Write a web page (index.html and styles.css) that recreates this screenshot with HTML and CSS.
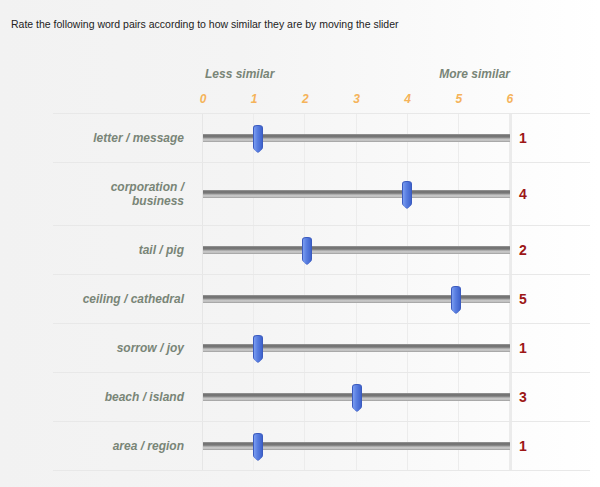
FILE: index.html
```html
<!DOCTYPE html>
<html>
<head>
<meta charset="utf-8">
<link rel="stylesheet" href="styles.css">
</head>
<body>
<div class="page">
  <p class="intro">Rate the following word pairs according to how similar they are by moving the slider</p>
  <div class="scale">
    <div class="head">
      <div class="spacer"></div>
      <div class="ends"><span>Less similar</span><span>More similar</span></div>
    </div>
    <div class="ticks">
      <div class="spacer"></div>
      <div class="nums"><span>0</span><span>1</span><span>2</span><span>3</span><span>4</span><span>5</span><span>6</span></div>
    </div>
    <div class="rows">
      <div class="row">
        <div class="label">letter / message</div>
        <div class="slider"><div class="track"><div class="handle" style="left:55px"></div></div></div>
        <div class="value">1</div>
      </div>
      <div class="row">
        <div class="label">corporation /<br>business</div>
        <div class="slider"><div class="track"><div class="handle" style="left:204px"></div></div></div>
        <div class="value">4</div>
      </div>
      <div class="row">
        <div class="label">tail / pig</div>
        <div class="slider"><div class="track"><div class="handle" style="left:104px"></div></div></div>
        <div class="value">2</div>
      </div>
      <div class="row">
        <div class="label">ceiling / cathedral</div>
        <div class="slider"><div class="track"><div class="handle" style="left:253px"></div></div></div>
        <div class="value">5</div>
      </div>
      <div class="row">
        <div class="label">sorrow / joy</div>
        <div class="slider"><div class="track"><div class="handle" style="left:55px"></div></div></div>
        <div class="value">1</div>
      </div>
      <div class="row">
        <div class="label">beach / island</div>
        <div class="slider"><div class="track"><div class="handle" style="left:154px"></div></div></div>
        <div class="value">3</div>
      </div>
      <div class="row">
        <div class="label">area / region</div>
        <div class="slider"><div class="track"><div class="handle" style="left:55px"></div></div></div>
        <div class="value">1</div>
      </div>
    </div>
  </div>
</div>
</body>
</html>
```

FILE: styles.css
```css
html, body {
  margin: 0;
  padding: 0;
}
body {
  width: 600px;
  height: 487px;
  overflow: hidden;
  background: linear-gradient(to right, #f2f2f2 0%, #f4f4f4 40%, #ffffff 100%);
  font-family: "Liberation Sans", Arial, sans-serif;
}
.page {
  padding-top: 18px;
}
.intro {
  margin: 0 0 0 11px;
  font-size: 10.5px;
  line-height: 13px;
  color: #222;
}
.scale {
  margin-left: 53px;
  width: 537px;
  margin-top: 36px;
}
.head, .ticks {
  display: flex;
}
.spacer {
  width: 150px;
  flex: none;
}
.ends {
  width: 305px;
  padding-left: 2px;
  display: flex;
  justify-content: space-between;
  font-weight: bold;
  font-style: italic;
  font-size: 12px;
  line-height: 14px;
  color: #798577;
}
.ticks {
  margin-top: 12px;
  height: 20px;
}
.nums {
  width: 315px;
  margin-left: -4px;
  display: flex;
  justify-content: space-between;
  font-weight: bold;
  font-style: italic;
  font-size: 12px;
  line-height: 13px;
  color: #f5b35a;
}
.nums span {
  width: 8px;
  text-align: center;
}
.rows {
  border-top: 1px solid #e8e8e8;
}
.row {
  display: grid;
  grid-template-columns: 150px 307px 78px;
  border-bottom: 1px solid #e8e8e8;
}
.label {
  padding: 17px 19px 17px 0;
  text-align: right;
  font-weight: bold;
  font-style: italic;
  font-size: 12px;
  line-height: 14px;
  color: #798577;
}
.slider {
  display: flex;
  align-items: center;
  border-left: 1px solid #e6e6e6;
  margin-left: -1px;
  background-image: repeating-linear-gradient(to right, transparent 0, transparent 50.17px, #ececec 50.17px, #ececec 51.17px);
}
.track {
  position: relative;
  flex: 1;
  height: 8px;
  background: linear-gradient(to bottom, #9a9a9a 0%, #6e6e6e 22%, #7c7c7c 40%, #b8b8b8 60%, #cfcfcf 75%, #9c9c9c 100%);
  box-shadow: 0 14px 0 -7px #ececec;
}
.handle {
  position: absolute;
  top: -9px;
  width: 10px;
  height: 28px;
  margin-left: -5px;
  border: 1px solid #3b5bbf;
  border-radius: 4px 4px 5px 5px / 3px 3px 6px 6px;
  background: linear-gradient(to right, #7b9df0 0%, #5b80e2 40%, #3f63cc 100%);
  box-sizing: border-box;
  clip-path: polygon(0 0, 100% 0, 100% 84%, 50% 100%, 0 84%);
}
.value {
  border-left: 2px solid #ebebeb;
  display: flex;
  align-items: center;
  padding-left: 7px;
  font-weight: bold;
  font-size: 14px;
  color: #9c1616;
}
```
